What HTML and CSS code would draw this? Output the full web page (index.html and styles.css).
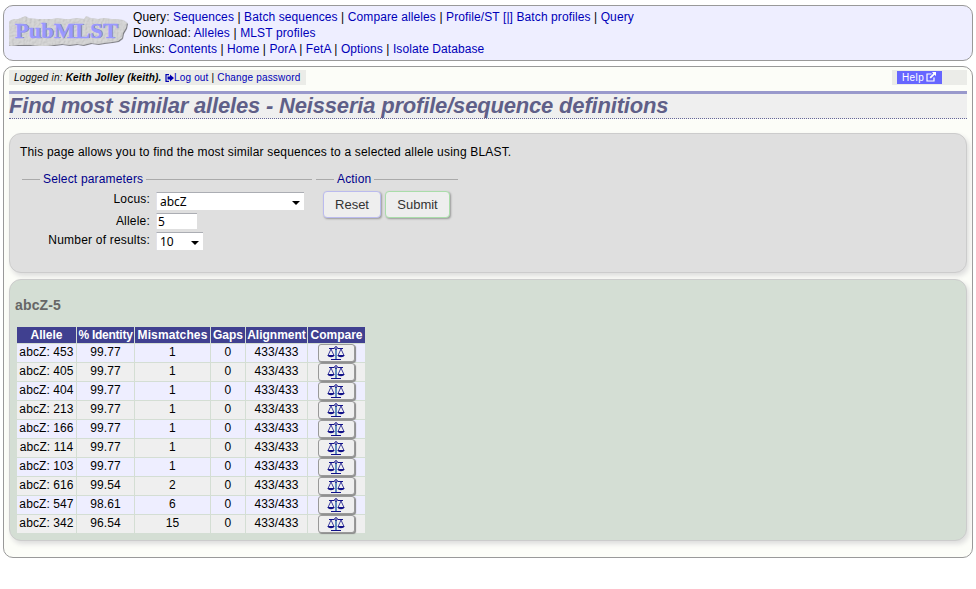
FILE: index.html
```html
<!DOCTYPE html>
<html lang="en">
<head>
<meta charset="utf-8">
<title>Find most similar alleles</title>
<link rel="stylesheet" href="styles.css">
</head>
<body>
<svg class="defs" aria-hidden="true">
  <symbol id="scales" viewBox="0 0 18 14">
    <g fill="none" stroke="#101088" stroke-width="1">
      <path d="M2 2.500h5M11 2.500h5M4 13.500h10"/>
      <path d="M9 3v10" stroke="#2565a8" stroke-width="1.400"/>
      <path d="M4 3L1 9.500M4 3l3 6.500M14 3l-3 6.500M14 3l3 6.500" stroke-width=".8"/>
      <circle cx="9" cy="2" r="1.300"/>
    </g>
    <path d="M.3 9h7.400q-.7 2.300-3.700 2.300T.3 9zM10.300 9h7.400q-.7 2.300-3.700 2.300T10.300 9z" fill="#101088"/>
  </symbol>
</svg>
<header class="menu">
  <svg class="logo" viewBox="0 0 120 32" width="120" height="32">
    <defs>
      <filter id="stone" x="-5%" y="-10%" width="110%" height="120%">
        <feTurbulence type="fractalNoise" baseFrequency=".45" numOctaves="2" seed="4" result="n"/>
        <feDiffuseLighting in="n" surfaceScale=".7" lighting-color="#dadada" result="l"><feDistantLight azimuth="225" elevation="66"/></feDiffuseLighting>
        <feComposite in="l" in2="SourceGraphic" operator="in" result="s"/>
        <feDropShadow in="s" dx=".8" dy=".8" stdDeviation=".5" flood-color="#444" flood-opacity=".8"/>
      </filter>
    </defs>
    <path filter="url(#stone)" d="M2 6l3-1 4 0 5-2 2-1 3 2 9 1 7 0 8 0 5-1 7 1 6 0 7-1 7 1 2-3 4 2 8 1 6-1 7 1 5 0 7 1 4 3-1 5-3 5-1 5-4 3-6 1-8 1-6 1-7-1-8 2-6-1-8 1-7-1-8 1-7 1-8 0-8-1-7 0-6 0-7 1-4-2-3-1 1-4-4-3 2-4-2-5z"/>
    <text class="logo-shade" x="6.700" y="24.400" textLength="103" lengthAdjust="spacingAndGlyphs">PubMLST</text>
    <text class="logo-text" x="6" y="23.700" textLength="103" lengthAdjust="spacingAndGlyphs">PubMLST</text>
  </svg>
  <nav class="links">
    <div class="l1">Query: <a>Sequences</a> | <a>Batch sequences</a> | <a>Compare alleles</a> | <a>Profile/ST [|] Batch profiles</a> | <a>Query</a></div>
    <div class="l2">Download: <a>Alleles</a> | <a>MLST profiles</a></div>
    <div class="l3">Links: <a>Contents</a> | <a>Home</a> | <a>PorA</a> | <a>FetA</a> | <a>Options</a> | <a>Isolate Database</a></div>
  </nav>
</header>
<main class="page">
  <div class="top">
    <div class="login"><span class="who"><i>Logged in: <b>Keith Jolley (keith).</b></i></span><a><svg class="out" viewBox="0 0 9 8" width="9" height="8"><path d="M4 .7H1v6.600h3" fill="none" stroke="#0000b0" stroke-width="1.200"/><path d="M2.500 2.500H5V.5L9 4 5 7.500v-2H2.500z" fill="#0000b0"/></svg>Log out</a> | <a>Change password</a></div>
    <div class="helpbar"><a class="help">Help <svg viewBox="0 0 10 10" width="10" height="10"><path d="M5.500 2H1v7h7V5.500" fill="none" stroke="#fff" stroke-width="1.200"/><path d="M6 0h4v4L8.600 2.700 4.800 6.500 3.500 5.200l3.800-3.800z" fill="#fff"/></svg></a></div>
  </div>
  <h1><span>Find most similar alleles - Neisseria profile/sequence definitions</span></h1>
  <section class="box query">
    <p>This page allows you to find the most similar sequences to a selected allele using BLAST.</p>
    <form class="sets">
      <div class="set params">
        <div class="legend">Select parameters</div>
        <div class="row r1"><label>Locus:</label><span class="field select locus">abcZ</span></div>
        <div class="row r2"><label>Allele:</label><span class="field text">5</span></div>
        <div class="row r3"><label>Number of results:</label><span class="field select num">10</span></div>
      </div>
      <div class="set action">
        <div class="legend">Action</div>
        <div class="buttons"><button type="button" class="reset">Reset</button><button type="button" class="submit">Submit</button></div>
      </div>
    </form>
  </section>
  <section class="box results">
    <h2>abcZ-5</h2>
    <table>
      <colgroup><col class="c1"><col class="c2"><col class="c3"><col class="c4"><col class="c5"><col class="c6"></colgroup>
      <thead><tr><th>Allele</th><th class="tight">% Identity</th><th>Mismatches</th><th>Gaps</th><th>Alignment</th><th>Compare</th></tr></thead>
      <tbody>
        <tr><td>abcZ: 453</td><td>99.77</td><td>1</td><td>0</td><td>433/433</td><td><span class="cmp"><svg><use href="#scales"/></svg></span></td></tr>
        <tr><td>abcZ: 405</td><td>99.77</td><td>1</td><td>0</td><td>433/433</td><td><span class="cmp"><svg><use href="#scales"/></svg></span></td></tr>
        <tr><td>abcZ: 404</td><td>99.77</td><td>1</td><td>0</td><td>433/433</td><td><span class="cmp"><svg><use href="#scales"/></svg></span></td></tr>
        <tr><td>abcZ: 213</td><td>99.77</td><td>1</td><td>0</td><td>433/433</td><td><span class="cmp"><svg><use href="#scales"/></svg></span></td></tr>
        <tr><td>abcZ: 166</td><td>99.77</td><td>1</td><td>0</td><td>433/433</td><td><span class="cmp"><svg><use href="#scales"/></svg></span></td></tr>
        <tr><td>abcZ: 114</td><td>99.77</td><td>1</td><td>0</td><td>433/433</td><td><span class="cmp"><svg><use href="#scales"/></svg></span></td></tr>
        <tr><td>abcZ: 103</td><td>99.77</td><td>1</td><td>0</td><td>433/433</td><td><span class="cmp"><svg><use href="#scales"/></svg></span></td></tr>
        <tr><td>abcZ: 616</td><td>99.54</td><td>2</td><td>0</td><td>433/433</td><td><span class="cmp"><svg><use href="#scales"/></svg></span></td></tr>
        <tr><td>abcZ: 547</td><td>98.61</td><td>6</td><td>0</td><td>433/433</td><td><span class="cmp"><svg><use href="#scales"/></svg></span></td></tr>
        <tr><td>abcZ: 342</td><td>96.54</td><td>15</td><td>0</td><td>433/433</td><td><span class="cmp"><svg><use href="#scales"/></svg></span></td></tr>
      </tbody>
    </table>
  </section>
</main>
</body>
</html>
```
FILE: styles.css
```css
* { box-sizing: border-box; }
html { background: #fff; }
body { margin: 0; padding: 5px 3px 0; font: 12px/16px "Liberation Sans", Arial, sans-serif; color: #000; white-space: nowrap; overflow: hidden; }
a { color: #0000b8; }
.defs { display: none; }
.menu { display: flex; height: 56px; border: 1px solid #999; border-radius: 10px; background: #eef; padding: 3px 0 0 5px; }
.logo { flex: none; margin-top: 5px; }
.logo-text, .logo-shade { font: bold 22px "Liberation Serif", serif; }
.logo-text { fill: #99f; stroke: #99f; stroke-width: .5px; }
.logo-shade { fill: #777; }
.links { margin-left: 4px; }
.links div { width: max-content; }
.l1 { letter-spacing: .1px; }
.l2 { letter-spacing: .13px; }
.l3 { letter-spacing: .085px; }
.page { margin-top: 5px; height: 492px; border: 1px solid #999; border-radius: 10px; background: #fcfdf8; padding: 3px 5px 0; }
.top { display: flex; justify-content: space-between; height: 15px; font-size: 10px; line-height: 15px; }
.login { width: 297px; padding-left: 5px; background: #ebece8; letter-spacing: .17px; }
.who { display: inline-block; width: 151px; letter-spacing: .2px; }
.out { margin-right: 0; vertical-align: -1px; }
.helpbar { width: 75px; padding: 1px 0 0 5px; background: #ebece8; }
.help { display: block; width: 45px; height: 13px; padding-left: 5px; background: #66f; color: #fff; line-height: 13px; letter-spacing: .4px; }
.help svg { vertical-align: -1px; margin-left: -1px; }
h1 { margin: 6px 0 0; height: 28px; border-top: 3px solid #99c; border-bottom: 1px dotted #669; background: #efefef; color: #5f5f88; font: italic bold 22px/23px "Liberation Sans", Arial, sans-serif; letter-spacing: -.18px; }
.box { border: 1px solid #ccc; border-radius: 12px; box-shadow: 2px 3px 5px #ddd; }
.query { height: 140px; margin-top: 14px; padding: 10px; background: #dfdfdf; }
.query p { margin: 0; letter-spacing: .185px; }
.sets { display: flex; gap: 4px; margin: 11px 0 0 2px; }
.set.params { width: 290px; }
.set.action { width: 142px; }
.legend { display: flex; align-items: center; gap: 3px; height: 16px; color: #00008b; letter-spacing: .17px; }
.legend::before { content: ""; width: 18px; height: 1px; background: #aaa; }
.legend::after { content: ""; flex: 1; height: 1px; background: #aaa; }
.row { display: flex; align-items: flex-start; }
.row label { width: 128px; margin-right: 6px; text-align: right; line-height: 14px; letter-spacing: .2px; }
.r1 { height: 25px; margin-top: 1px; padding-top: 4px; }
.r2 { height: 19px; }
.r2 label, .r3 label { padding-top: 1px; }
.field { display: block; background: #fff; border-top: 1px solid #abadb3; border-left: 1px solid #e2e3ea; font: 12px/17px "Noto Sans", sans-serif; padding-left: 3px; }
.select { display: flex; justify-content: space-between; align-items: center; height: 18px; padding-right: 4px; }
.select::after { content: ""; margin-top: 2px; border: 4px solid transparent; border-top-color: #000; border-bottom: 0; }
.locus { width: 148px; }
.num { width: 47px; }
.text { width: 41px; height: 16px; padding-left: 1px; line-height: 15px; }
.buttons { display: flex; gap: 4px; padding: 4px 0 0 7px; }
button { height: 27px; padding: 0; border-radius: 4px; background: #eee; color: #333; font: 13px "Liberation Sans", Arial, sans-serif; box-shadow: 1px 1px 2px #999; }
.reset { width: 58px; border: 1px solid #bbe; }
.submit { width: 65px; border: 1px solid #ada; }
.results { height: 262px; margin-top: 6px; padding: 16px 5px 0; background: #d4ded4; }
h2 { margin: 0; color: #666; font-size: 14px; line-height: 18px; letter-spacing: .15px; }
table { width: 350px; margin: 12px 0 0 1px; table-layout: fixed; border-collapse: separate; border-spacing: 1px; }
col.c1 { width: 59px; } col.c2 { width: 57px; } col.c3 { width: 75px; } col.c4 { width: 34px; } col.c5 { width: 61px; } col.c6 { width: 57px; }
th, td { padding: 0; text-align: center; overflow: visible; }
th { height: 16px; background: #404090; color: #fff; line-height: 16px; }
.tight { letter-spacing: -.25px; }
th:nth-child(3) { letter-spacing: .12px; }
td { height: 18px; line-height: 16px; vertical-align: top; letter-spacing: .1px; }
tbody tr:nth-child(odd) td { background: #eef; }
tbody tr:nth-child(even) td { background: #efefef; }
.cmp { display: flex; width: 37px; height: 18px; margin: 0 auto; justify-content: center; align-items: center; border: 1px solid #999; border-radius: 3px; background: #efefef; box-shadow: 1px 1px 1px #888; }
.cmp svg { width: 18px; height: 14px; margin-left: -1px; }
```
